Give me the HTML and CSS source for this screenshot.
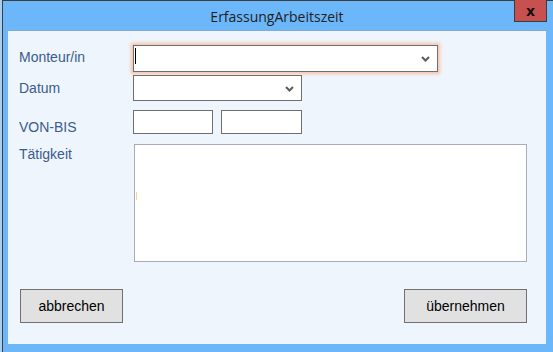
FILE: index.html
```html
<!DOCTYPE html>
<html lang="de">
<head>
    <meta charset="UTF-8">
    <meta name="viewport" content="width=device-width, initial-scale=1.0">
    <title>ErfassungArbeitszeit</title>
    <link rel="stylesheet" href="styles.css">
</head>
<body>
    <div class="window">
        <div class="titlebar">
            <span class="title">ErfassungArbeitszeit</span>
            <button class="close" type="button">x</button>
        </div>

        <div class="client">
            <div class="row row-monteur">
                <label class="label">Monteur/in</label>
                <div class="combo combo-wide focused">
                    <span class="caret"></span>
                    <svg class="chevron" width="9" height="6" viewBox="0 0 9 6"><path d="M1 1 L4.5 4.5 L8 1" fill="none" stroke="#5c5c5c" stroke-width="2"/></svg>
                </div>
            </div>

            <div class="row row-datum">
                <label class="label">Datum</label>
                <div class="combo combo-short">
                    <svg class="chevron" width="9" height="6" viewBox="0 0 9 6"><path d="M1 1 L4.5 4.5 L8 1" fill="none" stroke="#5c5c5c" stroke-width="2"/></svg>
                </div>
            </div>

            <div class="row row-zeit">
                <label class="label">VON-BIS</label>
                <input class="field field-von" type="text">
                <input class="field field-bis" type="text">
            </div>

            <div class="row row-taetigkeit">
                <label class="label">Tätigkeit</label>
                <div class="memo">
                    <span class="memo-caret"></span>
                </div>
            </div>

            <div class="actions">
                <button class="btn btn-cancel" type="button">abbrechen</button>
                <button class="btn btn-ok" type="button">übernehmen</button>
            </div>
        </div>
    </div>
</body>
</html>
```

FILE: styles.css
```css
html, body {
    margin: 0;
    padding: 0;
}
body {
    width: 553px;
    height: 352px;
    overflow: hidden;
    background-color: #a9cff0;
    font-family: "Liberation Sans", Arial, sans-serif;
}
.window {
    position: relative;
    margin-left: 2px;
    height: 351px;
    background-color: #6cb6fa;
    border-left: 1px solid #3d3d3d;
    border-top: 1px solid #3d3d3d;
}
.titlebar {
    height: 29px;
    display: flex;
    justify-content: center;
    align-items: center;
}
.title {
    font-family: "Open Sans", "Noto Sans", sans-serif;
    font-size: 14px;
    color: #1e1e1e;
    margin-left: -2px;
    margin-top: 1px;
}
.close {
    position: absolute;
    top: -1px;
    right: 6px;
    width: 33px;
    height: 22px;
    padding: 0;
    background-color: #c75050;
    border: 1px solid #3b3b3b;
    border-top: none;
    color: #111;
    font-family: "DejaVu Sans", sans-serif;
    font-size: 14px;
    font-weight: bold;
    line-height: 18px;
}
.client {
    margin-left: 5px;
    width: 538px;
    height: 314px;
    box-sizing: border-box;
    background-color: #eef5fc;
    border-top: 1px solid #86a9d4;
    padding-top: 14px;
}
.row {
    display: flex;
    align-items: flex-start;
    padding-left: 11px;
}
.label {
    width: 114px;
    flex-shrink: 0;
    font-size: 14px;
    line-height: 16px;
    color: #3c5c8c;
}
.row-monteur {
    height: 27px;
}
.row-monteur .label {
    padding-top: 4px;
}
.row-datum {
    margin-top: 3px;
    height: 26px;
}
.row-datum .label {
    padding-top: 5px;
}
.row-zeit {
    margin-top: 9px;
    height: 24px;
}
.row-zeit .label {
    padding-top: 9px;
}
.row-taetigkeit {
    margin-top: 10px;
}
.row-taetigkeit .label {
    padding-top: 2px;
}
.combo {
    position: relative;
    height: 100%;
    box-sizing: border-box;
    background: #fff;
    border: 1px solid #6f6f6f;
}
.combo-wide {
    width: 305px;
}
.combo-short {
    width: 169px;
}
.focused {
    box-shadow: 0 0 3px 2px #f9c2ab;
}
.caret {
    position: absolute;
    left: 1px;
    top: 2px;
    width: 1px;
    height: 16px;
    background: #000;
}
.chevron {
    position: absolute;
    right: 7px;
    top: 10px;
}
.field {
    height: 24px;
    box-sizing: border-box;
    margin: 0;
    padding: 0;
    background: #fff;
    border: 1px solid #6f6f6f;
    border-radius: 0;
    outline: none;
}
.field-von {
    width: 80px;
}
.field-bis {
    width: 81px;
    margin-left: 8px;
}
.memo {
    position: relative;
    width: 393px;
    height: 118px;
    margin-left: 1px;
    box-sizing: border-box;
    background: #fff;
    border: 1px solid #a8acb8;
}
.memo-caret {
    position: absolute;
    left: 1px;
    top: 47px;
    width: 1px;
    height: 8px;
    background: #fcd48a;
}
.actions {
    display: flex;
    justify-content: space-between;
    margin-top: 27px;
    padding: 0 19px 0 12px;
}
.btn {
    height: 34px;
    margin: 0;
    padding: 0;
    background-color: #e1e1e1;
    border: 1px solid #707070;
    border-radius: 0;
    color: #000;
    font-family: "Liberation Sans", Arial, sans-serif;
    font-size: 14px;
}
.btn-cancel {
    width: 103px;
}
.btn-ok {
    width: 123px;
}
```
